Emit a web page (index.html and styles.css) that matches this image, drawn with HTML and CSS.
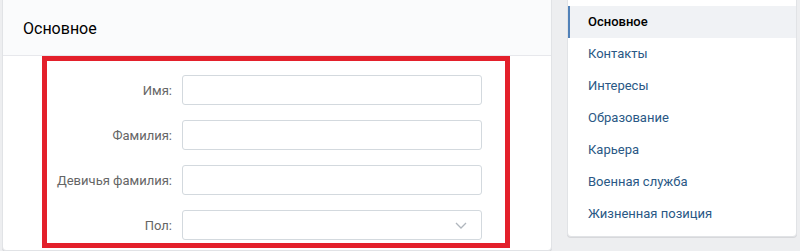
FILE: index.html
```html
<!DOCTYPE html>
<html lang="ru">
<head>
<meta charset="utf-8">
<link rel="stylesheet" href="styles.css">
</head>
<body>
<div class="page">
  <div class="main card">
    <div class="main-header">Основное</div>
    <form class="form">
      <div class="row">
        <label class="label">Имя:</label>
        <div class="field"></div>
      </div>
      <div class="row">
        <label class="label">Фамилия:</label>
        <div class="field"></div>
      </div>
      <div class="row">
        <label class="label">Девичья фамилия:</label>
        <div class="field"></div>
      </div>
      <div class="row">
        <label class="label">Пол:</label>
        <div class="field select">
          <svg class="chevron" width="12" height="7" viewBox="0 0 12 7"><path d="M1 1l5 5 5-5" fill="none" stroke="#b0b6bd" stroke-width="1.3"/></svg>
        </div>
      </div>
      <div class="highlight"></div>
    </form>
  </div>
  <nav class="side card">
    <a class="item active">Основное</a>
    <a class="item">Контакты</a>
    <a class="item">Интересы</a>
    <a class="item">Образование</a>
    <a class="item">Карьера</a>
    <a class="item">Военная служба</a>
    <a class="item">Жизненная позиция</a>
  </nav>
</div>
</body>
</html>
```
FILE: styles.css
```css
* { box-sizing: border-box; }
html, body { margin: 0; padding: 0; }
body {
  background: #edeef0;
  font-family: Roboto, "Open Sans", "Liberation Sans", sans-serif;
  font-size: 13px;
  width: 800px;
  height: 251px;
  overflow: hidden;
}
.page {
  display: flex;
  align-items: flex-start;
  gap: 15px;
  padding: 0 3px 0 2px;
  margin-top: -1px;
}
.card {
  background: #fff;
  border: 1px solid #e1e3e6;
  border-radius: 0 0 4px 4px;
  box-shadow: 0 1px 0 0 #d7d8db;
}
.main {
  width: 550px;
  height: 252px;
}
.main-header {
  height: 56px;
  background: #fafbfc;
  border-bottom: 1px solid #e7e8ec;
  padding: 19px 0 0 20px;
  font-size: 16px;
  color: #000;
}
.form {
  position: relative;
  padding-top: 19px;
  display: flex;
  flex-direction: column;
  gap: 15px;
}
.row {
  display: flex;
  align-items: center;
  gap: 10px;
}
.label {
  width: 169px;
  text-align: right;
  color: #656565;
}
.field {
  width: 300px;
  height: 30px;
  border: 1px solid #d3d9de;
  border-radius: 3px;
  background: #fff;
}
.select {
  display: flex;
  align-items: center;
  justify-content: flex-end;
  padding-right: 14px;
}
.highlight {
  position: absolute;
  left: 39px;
  top: 0;
  width: 468px;
  height: 192px;
  border: 5px solid #e3202b;
}
.side {
  width: 230px;
  padding: 6px 0 6px;
  display: flex;
  flex-direction: column;
}
.item {
  display: block;
  height: 32px;
  line-height: 32px;
  padding-left: 18px;
  color: #2a5885;
  border-left: 2px solid transparent;
}
.item.active {
  background: #f0f2f5;
  border-left-color: #5181b8;
  color: #000;
  font-weight: 500;
}
```
